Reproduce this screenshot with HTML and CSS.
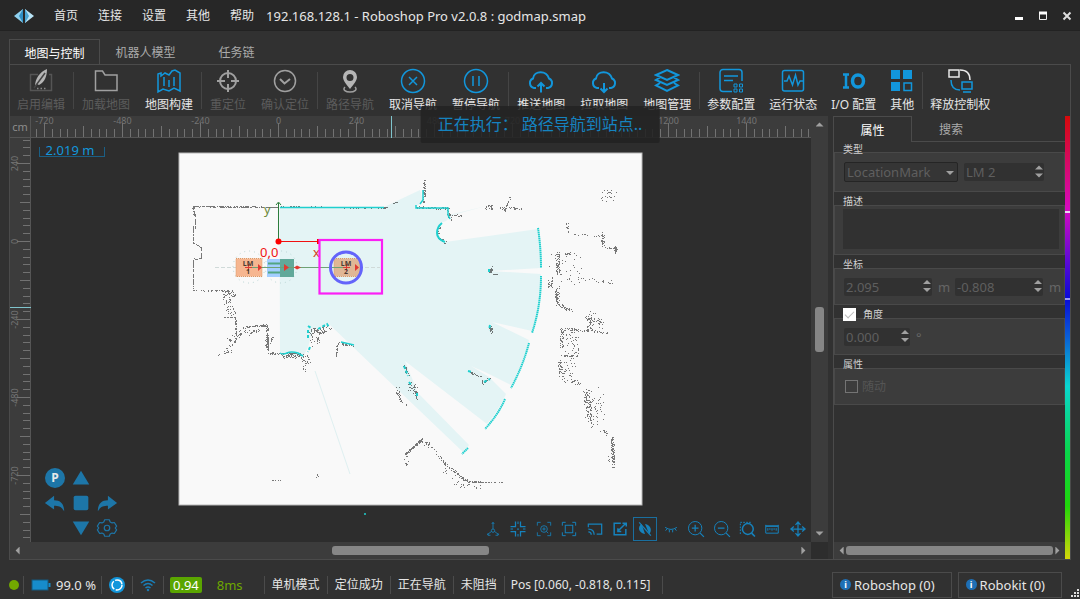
FILE: index.html
```html
<!DOCTYPE html>
<html lang="zh-CN">
<head>
<meta charset="utf-8">
<meta name="viewport" content="width=device-width, initial-scale=1">
<title>Roboshop Pro</title>
<link rel="stylesheet" href="styles.css">
</head>
<body>
<header class="titlebar">
  <svg class="logo" width="20" height="14" viewBox="0 0 20 14"><path d="M9 0v14L0 7z" fill="#8fd0ee"/><path d="M9 0v14L5 7z" fill="#2f8fc4"/><path d="M11 0v14l9-7z" fill="#b9e4f6"/><path d="M11 0v14l4-7z" fill="#4aa5d4"/></svg>
  <nav class="menu">
    <button>首页</button><button>连接</button><button>设置</button><button>其他</button><button>帮助</button>
  </nav>
  <h1 class="title">192.168.128.1 - Roboshop Pro v2.0.8 : godmap.smap</h1>
  <div class="window-buttons">
    <button aria-label="最小化"><svg width="10" height="10"><path d="M1 7.500h8" stroke="#fff" stroke-width="3"/></svg></button>
    <button aria-label="最大化"><svg width="10" height="10"><path d="M1.500 2v6.500h7V2" fill="none" stroke="#eee"/><path d="M1 2h8" stroke="#fff" stroke-width="3"/></svg></button>
    <button aria-label="关闭"><svg width="10" height="10"><path d="M1.500 1.500l7 7M8.500 1.500l-7 7" stroke="#ddd" stroke-width="2"/></svg></button>
  </div>
</header>

<main class="main">
  <div class="tabs" role="tablist">
    <button class="tab active" role="tab" aria-selected="true">地图与控制</button>
    <button class="tab" role="tab">机器人模型</button>
    <button class="tab" role="tab">任务链</button>
  </div>
  <div class="panel">
    <div class="toolbar">
      <button class="tool" disabled><svg viewBox="0 0 26 26"><path d="M10 6.500H2.500v16h21v-16H21" stroke="#555"/><path d="M7 19C7 10 12 4 19 1c0 7-2 13-8 16l-2-1z" fill="#b5b5b5" stroke="none"/><path d="M6 20L17 5" stroke="#444"/><path d="M9 20.500h9" stroke="#888" stroke-dasharray="1.500 2"/></svg>启用编辑</button>
      <i class="sep"></i>
      <button class="tool" disabled><svg viewBox="0 0 26 26"><path d="M2.500 3h7l2.500 4h12v15.500h-21.500z"/></svg>加载地图</button>
      <button class="tool"><svg viewBox="0 0 26 26"><path d="M2 6l3-1v3l4-3 4 2 3-4 3-1 5 3v18l-6-3-5 3-6-2-5 3z M8 9v9M13 12v7M18 9v9"/></svg>地图构建</button>
      <i class="sep"></i>
      <button class="tool" disabled><svg viewBox="0 0 26 26"><circle cx="13" cy="13" r="8" stroke-width="2"/><path d="M13 2v8M13 16v8M2 13h8M16 13h8" stroke-width="2"/></svg>重定位</button>
      <button class="tool" disabled><svg viewBox="0 0 26 26"><circle cx="13" cy="13" r="10.500"/><path d="M8 11l4.500 4.500L18 11" stroke-width="2"/></svg>确认定位</button>
      <i class="sep"></i>
      <button class="tool" disabled><svg viewBox="0 0 26 26"><path d="M13 2a7 7 0 0 1 7 7c0 4-4 8-7 12C10 17 6 13 6 9a7 7 0 0 1 7-7zm0 4a3.500 3.500 0 1 0 0 7 3.500 3.500 0 0 0 0-7z" fill="#b5b5b5" stroke="none" fill-rule="evenodd"/><path d="M8 19c-3 3 1 5 5 5s8-2 5-5"/></svg>路径导航</button>
      <button class="tool"><svg viewBox="0 0 26 26"><circle cx="13" cy="13" r="11.500"/><path d="M9 9l8 8M17 9l-8 8"/></svg>取消导航</button>
      <button class="tool"><svg viewBox="0 0 26 26"><circle cx="13" cy="13" r="11.500"/><path d="M10 8v10M16 8v10"/></svg>暂停导航</button>
      <i class="sep"></i>
      <button class="tool"><svg viewBox="0 0 26 26"><path d="M8 20H6a5 5 0 0 1-1-9.500C6 2 19 2 21 10.500A5 5 0 0 1 20 20h-2M13 24.500V15M9.500 18.500L13 15l3.500 3.500" stroke-width="2"/></svg>推送地图</button>
      <button class="tool"><svg viewBox="0 0 26 26"><path d="M8 20H6a5 5 0 0 1-1-9.500C6 2 19 2 21 10.500A5 5 0 0 1 20 20h-2M13 15v9M9.500 20.500L13 24l3.500-3.500" stroke-width="2"/></svg>拉取地图</button>
      <button class="tool"><svg viewBox="0 0 26 26"><path d="M13 2l11 5-11 5L2 7zM6 9.500L2 12l11 5 11-5-4-2.500M6 15l-4 2.500 11 5.500 11-5.500-4-2.500" stroke-width="2"/></svg>地图管理</button>
      <i class="sep"></i>
      <button class="tool compact"><svg viewBox="0 0 26 26"><path d="M14 23.500H5a3 3 0 0 1-3-3v-16a3 3 0 0 1 3-3h16a3 3 0 0 1 3 3V13M6 8h14M6 12.500h9"/><path d="M16 16h3v3h-3zM21.500 16h3v3h-3zM16 21h3v3h-3zM21.500 21h3v3h-3z" stroke-width="1"/></svg>参数配置</button>
      <button class="tool"><svg viewBox="0 0 26 26"><rect x="2.500" y="2.500" width="21" height="20.500" rx="2"/><path d="M4 13h3l2-5 3.500 9 3-10 2.500 10 2-4h3"/></svg>运行状态</button>
      <button class="tool compact"><svg viewBox="0 0 26 26"><path d="M2 6.500h6M2 19.500h6M5 6v14" stroke-width="2.500"/><ellipse cx="17" cy="13" rx="5.500" ry="6" stroke-width="3.500"/></svg>I/O 配置</button>
      <button class="tool compact"><svg viewBox="0 0 26 26"><path d="M2 2h9v9H2zM14 2h9v9h-9zM2 14h9v9H2z" fill="#1296db" stroke="none"/><path d="M15 15h7.500v7.500H15z" stroke-width="1.500"/></svg>其他</button>
      <i class="sep"></i>
      <button class="tool compact"><svg viewBox="0 0 26 26"><g stroke="#e8e8e8"><path d="M2 2h10v7H2zM13 2c7 0 10 4 10 10"/></g><path d="M15 14h10v7H15zM4 12c0 7 3 10 9 10M16 24h8"/></svg>释放控制权</button>
    </div>

    <div class="workspace">
      <section class="map-area">
        <div class="ruler-unit">cm</div>
        <svg class="ruler" id="ruler-x"></svg>
        <svg class="ruler" id="ruler-y"></svg>
        <div class="viewport">
          <svg class="map">
            <g transform="translate(-31 -138)">
              <rect x="179" y="153" width="463" height="352" fill="#f9f9f9" stroke="#b8b8b8"/>
              <path fill="#e4f4f5" d="M279.500 207H384L420 190l3 11-7 6 32 1 1 7 37-9-33 9-7 6q-10 3-9 11t8 10l93-13q3 20 3 39l-51 3 51 3q0 30-9 57l-40-9 37 18q-6 23-18 45l-24-12-16-7 18 11 17 17q-7 16-19 30l-82-63 13 32 51 52-6 7L330 325l-17 4-5 18-5 10-23-4z"/>
              <path d="M315 371l35 103" stroke="#dff0f1" fill="none"/>
              <g fill="none" stroke="#b8d5d4" stroke-dasharray="1 4"><circle cx="249" cy="267" r="16"/><circle cx="281" cy="267" r="16"/></g>
              <path d="M215 267.500h165" stroke="#d0dad9" stroke-dasharray="4 2"/>
              <g id="walls"></g>
              <g fill="none" stroke="#1fd0cf" stroke-width="2">
                <path stroke-width="1.500" d="M280 207.500H384M280 353q3 2 7 0t11 0l5 3M341 342l13 3M423 190v10l-3 4M416 205v3l15 0h17v7l2 4"/>
                <path d="M442 223q-5 4-5 10t8 9"/>
                <path stroke-dasharray="1.500 .5" d="M538 228q3 20 3 40M541 276q0 30-9 57M529 343q-6 23-18 45M505 399q-7 16-20 30M468 448l-6 6"/>
                <path stroke-dasharray="3 2" d="M308 326l3 2M318 329l9-5 2 3M308 330v10M310 347l-2 5M489 269v4M490 325l-1 5M404 366l4 10M417 393v5M468 371l4 1M484 382l6-3M409 382l3 4"/>
              </g>
              <rect x="236" y="258.500" width="26" height="18" fill="#f6b690" stroke="#dc9966" stroke-dasharray="1 1"/>
              <rect x="334" y="258.500" width="26" height="18" fill="#e0b795" stroke="#dc9966" stroke-dasharray="1 1"/>
              <rect x="267" y="259" width="14" height="18" fill="#a3ceff"/>
              <rect x="280" y="259" width="14" height="18" fill="#61a99a"/>
              <path d="M268 263.500h12M268 272.500h12" stroke="#52a583" stroke-width="2"/>
              <rect x="248" y="267" width="98" height="1" fill="#6fa274"/>
              <g fill="#e03a32"><path d="M258 264l4 3.500-4 3.500zM284 264l5 3.500-5 3.500zM355 264l4 3.500-4 3.500zM294 267.500l3-2 4 2-4 2z"/><path d="M245 267h7v1h-7zM248 264h1v7h-1zM343 267h7v1h-7zM346 264h1v7h-1z"/></g>
              <g class="mark-label"><text x="248" y="266">LM</text><text x="248" y="274">1</text><text x="346" y="266">LM</text><text x="346" y="274">2</text></g>
              <path d="M278.500 241v-38M276 205l2.500-3 2.500 3" fill="none" stroke="#2c7d3c"/>
              <rect x="278" y="241" width="41" height="1" fill="#f01010"/><circle cx="278.500" cy="241.500" r="3" fill="red"/><path d="M317 239h3v5h-3z" fill="red"/>
              <text class="axis-y" x="264" y="214">y</text><text class="axis-x" x="313" y="257">x</text><text class="origin" x="260" y="257">0,0</text>
              <rect x="319.500" y="240" width="62.500" height="53.500" fill="none" stroke="#fb1ff5" stroke-width="2.200"/>
              <circle cx="346" cy="267.500" r="15.500" fill="none" stroke="#6464fa" stroke-width="3"/>
              <circle cx="365" cy="514" r="1" fill="#1fd0cf"/>
            </g>
          </svg>
          <div class="scale">2.019 m</div>
          <div class="drive-pad">
            <button class="park" aria-label="驻车">P</button>
            <button aria-label="前进"><svg viewBox="0 0 24 24"><path d="M12 4l9 15H3z"/></svg></button><span></span>
            <button aria-label="左转"><svg viewBox="0 0 24 24"><path d="M11 4v5c7 0 11 4 11 12-3-5-6-6-11-6v4L1 12z"/></svg></button>
            <button aria-label="停止"><svg viewBox="0 0 24 24"><rect x="4" y="4" width="16" height="16" rx="2"/></svg></button>
            <button aria-label="右转"><svg viewBox="0 0 24 24"><path d="M13 4v5C6 9 2 13 2 21c3-5 6-6 11-6v4l10-7z"/></svg></button>
            <span></span><button aria-label="后退"><svg viewBox="0 0 24 24"><path d="M12 20L3 5h18z"/></svg></button>
            <button aria-label="设置"><svg viewBox="0 0 24 24"><g fill="none" stroke="#1d76a8" stroke-width="1.300" stroke-linejoin="round"><path d="M9.500 3h5l1 2.500 2 1 2.500-.5 2.500 4-1.500 2 1.500 2-2.500 4-2.500-.5-2 1-1 2.500h-5l-1-2.500-2-1-2.500.5-2.500-4 1.500-2-1.500-2 2.500-4 2.500.5 2-1z"/><circle cx="12" cy="12" r="3"/></g></svg></button>
          </div>
          <div class="map-tools">
            <button aria-label="坐标轴"><svg viewBox="0 0 24 24"><path stroke-width="1" d="M12 4v8M5 19l5-4M19 19l-5-4M10.500 6L12 4l1.500 2M6 17v2.500h3M18 17v2.500h-3"/><circle cx="12" cy="14" r="2" stroke-width="1"/></svg></button>
            <button aria-label="居中"><svg viewBox="0 0 24 24"><path d="M3 9h6V3M15 3v6h6M3 15h6v6M15 21v-6h6M11 12h2" stroke-width="1.500"/><path d="M12 3v3M12 18v3M3 12h3M18 12h3"/></svg></button>
            <button aria-label="定位"><svg viewBox="0 0 24 24"><path stroke-width="1" d="M4 8V4h4M16 4h4v4M20 16v4h-4M8 20H4v-4M15 15l2 2M10 12h4M12 10v4"/><circle cx="12" cy="12" r="4" stroke-width="1"/></svg></button>
            <button aria-label="适应窗口"><svg viewBox="0 0 24 24"><path d="M4 8V4h4M16 4h4v4M20 16v4h-4M8 20H4v-4"/><rect x="7.500" y="7.500" width="9" height="9"/></svg></button>
            <button aria-label="投射"><svg viewBox="0 0 24 24"><path d="M4 10V6h16v12h-6M4 12q7 0 7 7M4 15.500q3.500 0 3.500 3.500" stroke-width="1.500"/></svg></button>
            <button aria-label="导出"><svg viewBox="0 0 24 24"><path d="M13 5H5v14h14v-7M9 15L19 5M15 5h4.500v4M9.500 11v4h4" stroke-width="1.800"/></svg></button>
            <button class="on" aria-label="隐藏激光"><svg viewBox="0 0 24 24"><path d="M8 6C2 10 5 17 12 18zM12 6c7 1 9 8 5 12z" fill="#1682bc" stroke="none"/><path d="M5 4l14 16" stroke-width="1.500"/></svg></button>
            <button aria-label="闭眼"><svg viewBox="0 0 24 24"><path d="M5 10q7 5 14 0M7 12l-1.500 2M10 13v3M14 13v3M17 12l1.500 2"/></svg></button>
            <button aria-label="放大"><svg viewBox="0 0 24 24"><circle cx="11" cy="11" r="8"/><path d="M17 17l4.500 4.500M7 11h8M11 7v8" stroke-width="1.500"/></svg></button>
            <button aria-label="缩小"><svg viewBox="0 0 24 24"><circle cx="11" cy="11" r="8"/><path d="M17 17l4.500 4.500M7 11h8" stroke-width="1.500"/></svg></button>
            <button aria-label="框选放大"><svg viewBox="0 0 24 24"><path d="M4 18V4h13" stroke-dasharray="2 1.500"/><circle cx="13" cy="12" r="6.500" stroke-width="1.800"/><path d="M17.500 17l4 4" stroke-width="2"/></svg></button>
            <button aria-label="测距"><svg viewBox="0 0 24 24"><path d="M4.500 7v10h15V7"/><path d="M4.500 8.500h15" stroke-width="2"/><path d="M7 11v3M9.500 11v2M12 11v3M14.500 11v2M17 11v3"/></svg></button>
            <button aria-label="移动"><svg viewBox="0 0 24 24"><path d="M12 4v16M4 12h16M9 7l3-3.500L15 7M9 17l3 3.500 3-3.500M7 9l-3.500 3L7 15M17 9l3.500 3-3.500 3" stroke-width="1.500"/></svg></button>
          </div>
        </div>
        <div class="vscroll"><i class="arrow up"></i><i class="thumb"></i><i class="arrow down"></i></div>
        <div class="hscroll"><i class="arrow left"></i><i class="thumb"></i><i class="arrow right"></i></div>
      </section>

      <aside class="side">
        <div class="side-tabs" role="tablist">
          <button class="side-tab active" role="tab" aria-selected="true">属性</button>
          <button class="side-tab" role="tab">搜索</button>
        </div>
        <div class="side-body">
          <section class="group first">
            <h2 class="group-title">类型</h2>
            <div class="group-body row">
              <span class="select"><select aria-label="类型" disabled><option>LocationMark</option></select></span>
              <span class="spin medium"><input aria-label="编号" value="LM 2" disabled><i class="arrow up"></i><i class="arrow down"></i></span>
            </div>
          </section>
          <section class="group">
            <h2 class="group-title">描述</h2>
            <div class="group-body note"><textarea aria-label="描述" disabled></textarea></div>
          </section>
          <section class="group">
            <h2 class="group-title">坐标</h2>
            <div class="group-body row">
              <span class="spin"><input aria-label="X" value="2.095" disabled><i class="arrow up"></i><i class="arrow down"></i></span><span class="unit">m</span>
              <span class="spin"><input aria-label="Y" value="-0.808" disabled><i class="arrow up"></i><i class="arrow down"></i></span><span class="unit">m</span>
            </div>
          </section>
          <section class="group">
            <h2 class="group-title"><label class="check"><input type="checkbox" checked disabled>角度</label></h2>
            <div class="group-body row">
              <span class="spin small"><input aria-label="角度" value="0.000" disabled><i class="arrow up"></i><i class="arrow down"></i></span><span class="unit">°</span>
            </div>
          </section>
          <section class="group">
            <h2 class="group-title">属性</h2>
            <div class="group-body row"><label class="check plain"><input type="checkbox" disabled>随动</label></div>
          </section>
        </div>
        <div class="hscroll"><i class="arrow left"></i><i class="thumb"></i><i class="arrow right"></i></div>
      </aside>
      <div class="hue"></div>
    </div>
  </div>
</main>

<footer class="status">
  <span class="cell"><i class="dot"></i></span>
  <span class="cell battery"><svg width="20" height="14"><rect x="1" y="2" width="16" height="10" fill="#178ccb" stroke="#155a80"/><path d="M18.500 5v4" stroke="#178ccb" stroke-width="2"/></svg>99.0 %</span>
  <span class="cell"><svg width="16" height="16"><circle cx="8" cy="8" r="8" fill="#1296db"/><circle cx="8" cy="8" r="5" fill="none" stroke="#fff" stroke-width="1.500" stroke-dasharray="9 1.500"/></svg></span>
  <span class="cell"><svg width="16" height="14" fill="none" stroke="#1a7fb8" stroke-width="1.500"><path d="M1 5q7-6 14 0M3.500 7.500q4.500-4 9 0M5.500 10q2.500-2 5 0"/><circle cx="8" cy="12" r=".5"/></svg></span>
  <span class="cell load"><b class="badge">0.94</b><span class="ping">8ms</span></span>
  <span class="cell">单机模式</span><span class="cell">定位成功</span><span class="cell">正在导航</span><span class="cell">未阻挡</span>
  <span class="cell pos">Pos [0.060, -0.818, 0.115]</span>
  <div class="log-buttons">
    <button><i class="info">i</i>Roboshop (0)</button>
    <button><i class="info">i</i>Robokit (0)</button>
  </div>
  <svg class="grip" width="9" height="9" fill="#ddd"><path d="M6 0h2v2H6zM3 3h2v2H3zM6 3h2v2H6zM0 6h2v2H0zM3 6h2v2H3zM6 6h2v2H6z"/></svg>
</footer>
<div class="toast" role="status">正在执行：&nbsp;路径导航到站点..</div>
<script src="map.js"></script>
</body>
</html>
```
FILE: styles.css
```css
* { box-sizing: border-box; }
body { margin: 0; min-height: 100vh; display: flex; flex-direction: column; background: #313131; color: #e6e6e6; font: 12px/16px "Noto Sans", "Noto Sans CJK SC", sans-serif; }
button { border: 0; padding: 0; background: none; color: inherit; font: inherit; }
h1, h2 { margin: 0; font-weight: normal; }
svg { display: block; }

.titlebar { height: 31px; flex: none; display: flex; align-items: center; padding: 2px 8px 0 14px; background: #272727; border-bottom: 1px solid #222; }
.menu { display: flex; gap: 20px; margin: 0 12px 0 20px; }
.title { font-size: 13px; white-space: nowrap; flex: 1; }
.window-buttons { display: flex; gap: 14px; }

.main { flex: 1; display: flex; flex-direction: column; padding: 8px 9px 10px; min-height: 0; }
.tabs { display: flex; height: 26px; flex: none; margin-bottom: -1px; }
.tab { min-width: 91px; padding: 2px 0 0; color: #aaa; }
.tab.active { border: 1px solid #4b4b4b; border-bottom: 0; background: #313131; color: #fff; }
.panel { flex: 1; display: flex; flex-direction: column; min-height: 0; border: 1px solid #4b4b4b; }
.toolbar { display: flex; height: 51px; flex: none; gap: 1px; }
.tool { padding: 3px 7px 0; display: flex; flex-direction: column; align-items: center; gap: 3px; white-space: nowrap; }
.tool.compact { padding: 3px 6px 0; }
.tool svg { width: 26px; height: 26px; fill: none; stroke: #1296db; stroke-width: 1.5; }
.tool:disabled { color: #5c5c5c; }
.tool:disabled svg { stroke: #a0a0a0; }
.sep { width: 1px; height: 37px; margin-top: 7px; background: #454545; flex: none; }

.workspace { flex: 1; display: flex; min-height: 0; }
.map-area { flex: 1; min-width: 0; display: grid; grid-template-columns: 21px 1fr 17px; grid-template-rows: 22px 1fr 17px; background: #2d2d2d; }
.ruler-unit { background: #3c3c3c; color: #8c8c8c; padding-top: 3px; text-align: center; font-size: 11px; border: solid #555; border-width: 0 1px 1px 0; }
.ruler { width: 100%; height: 100%; background: #3c3c3c; overflow: hidden; }
.ruler text { font-size: 9px; fill: #747474; text-anchor: middle; }
#ruler-x { grid-area: 1 / 2; }
#ruler-y { grid-area: 2 / 1; }
.viewport { grid-area: 2 / 2; position: relative; overflow: hidden; background: #2d2d2d; }
.map { position: absolute; width: 100%; height: 100%; }
.mark-label { font-size: 7px; font-weight: bold; fill: #4a3a33; text-anchor: middle; }
.axis-x { font-size: 13px; fill: #d33a1e; }
.axis-y { font-size: 13px; fill: #6d8a3a; }
.origin { font-size: 13px; fill: #f01414; }
.scale { position: absolute; left: 8px; top: 5px; width: 66px; text-align: center; color: #1296db; font-size: 13px; line-height: 14px; padding-right: 4px; }
.scale::after { content: ""; position: absolute; inset: 4px 0 0; border: solid #1b5f85; border-width: 0 1px 1px; }
.drive-pad { position: absolute; left: 11px; bottom: 2px; display: grid; grid-template-columns: repeat(3, 26px); grid-auto-rows: 25px; place-items: center; }
.drive-pad svg { width: 22px; height: 22px; fill: #1d76a8; }
.park { width: 20px; height: 20px; border-radius: 50%; background: #1d76a8; color: #e8e8e8; font-weight: bold; line-height: 20px; }
.map-tools { position: absolute; right: 1px; bottom: 1px; width: 329px; display: flex; justify-content: space-between; }
.map-tools button { width: 24px; height: 24px; display: grid; place-items: center; }
.map-tools .on { border: 1px solid #1a6f9f; }
.map-tools svg { width: 20px; height: 20px; fill: none; stroke: #1682bc; stroke-width: 1.2; }

.arrow { width: 8px; height: 8px; background: #a0a0a0; flex: none; }
.up { clip-path: polygon(50% 30%, 100% 80%, 0 80%); }
.down { clip-path: polygon(0 20%, 100% 20%, 50% 70%); }
.left { clip-path: polygon(20% 50%, 70% 0, 70% 100%); }
.right { clip-path: polygon(30% 0, 80% 50%, 30% 100%); }
.vscroll { grid-area: 1 / 3 / 3 / 4; display: flex; flex-direction: column; justify-content: space-between; align-items: center; padding: 4px 0; background: #3c3c3c; }
.vscroll .thumb { width: 9px; height: 45px; border-radius: 3px; background: #868686; }
.map-area .hscroll { grid-area: 3 / 1 / 4 / 3; }
.hscroll { display: flex; justify-content: space-between; align-items: center; height: 17px; flex: none; padding: 0 4px; background: #3c3c3c; }
.hscroll .thumb { width: 157px; height: 9px; border-radius: 3px; background: #868686; }

.side { width: 232px; margin-left: 5px; flex: none; display: flex; flex-direction: column; border-left: 1px solid #4b4b4b; }
.side-tabs { display: flex; height: 26px; flex: none; border-bottom: 1px solid #4b4b4b; }
.side-tab { width: 78px; padding-top: 2px; color: #aaa; }
.side-tab.active { height: 26px; border: solid #4b4b4b; border-width: 1px 1px 0 0; background: #313131; color: #fff; }
.side-body { flex: 1; min-height: 0; overflow: hidden; }
.side .hscroll .thumb { flex: 1; }
.group-title { height: 13px; padding: 6px 0 0 9px; font-size: 10px; line-height: 7px; color: #d0d0d0; }
.first .group-title { height: 10px; padding-top: 4px; }
.group-body { padding: 0 0 0 9px; border: 1px solid #494949; background: #3c3c3c; }
.row { display: flex; align-items: center; gap: 6px; height: 37px; }
.first .row { height: 40px; }
.note { padding: 3px 5px 5px 8px; }
textarea { display: block; width: 100%; height: 40px; border: 0; background: #313131; resize: none; }
.select { position: relative; width: 114px; }
.select::after { content: ""; position: absolute; right: 4px; top: 9px; border: 4px solid transparent; border-top-color: #a0a0a0; }
select { appearance: none; display: block; width: 100%; height: 20px; padding: 0 2px; border: 1px solid #252525; border-radius: 2px; background: #353535; color: #5f5f5f; opacity: 1; font: 13px/16px "Noto Sans", sans-serif; }
.spin { display: grid; grid-template-columns: 1fr 8px; width: 88px; height: 18px; padding-right: 1px; flex: none; background: #313131; border-radius: 2px; }
.spin.medium { width: 80px; }
.spin.small { width: 66px; }
.spin input { grid-row: 1 / 3; width: 100%; min-width: 0; border: 0; padding: 0 2px; background: none; color: #5f5f5f; font: 13px/16px "Noto Sans", sans-serif; }
.unit { width: 11px; flex: none; color: #666; font-size: 13px; }
.check { display: flex; align-items: center; gap: 7px; height: 7px; }
.check input { appearance: none; width: 13px; height: 13px; margin: 0; background: #fff; display: grid; place-items: center; }
.check input:checked::after { content: ""; width: 8px; height: 4px; margin-bottom: 3px; border: solid #bbb; border-width: 0 0 1px 1px; transform: rotate(-45deg); }
.check.plain { gap: 4px; padding-left: 1px; color: #555; font-size: 12px; }
.check.plain input { border: 1px solid #747474; background: none; }
.hue { width: 5px; flex: none; background: linear-gradient(#e8d8f0, #e8d8f0) 0 95px / 100% 2px no-repeat, linear-gradient(#9a9af5, #9a9af5) 0 182px / 100% 2px no-repeat, linear-gradient(#d60a0a, #d60ac0 21%, #5a0ad6 33%, #0a0ad6 41%, #0a60d6 50%, #0ad6d0 61%, #0ad64a 76%, #20d60a 88%, #d6d60a); }

.status { height: 29px; flex: none; display: flex; align-items: center; padding-left: 9px; }
.cell { display: flex; align-items: center; height: 18px; padding: 0 7px; border-right: 1px solid #4b4b4b; white-space: nowrap; }
.cell:first-child { padding: 0 4px 0 0; }
.dot { width: 10px; height: 10px; border-radius: 50%; background: #72a800; }
.battery { gap: 5px; padding-right: 5px; font-size: 13px; }
.load { gap: 15px; padding: 0 21px 0 6px; font-size: 13px; }
.badge { padding: 0 3px; border-radius: 2px; background: #5aa500; color: #fff; font-weight: normal; }
.ping { color: #6ea800; }
.pos { padding: 0 11px 0 6px; }
.log-buttons { display: flex; gap: 6px; margin-left: auto; }
.log-buttons button { display: flex; align-items: center; gap: 3px; height: 26px; padding: 0 16px 0 7px; border: 1px solid #4b4b4b; font-size: 13px; }
.info { width: 11px; height: 11px; border-radius: 50%; background: #1e6fb5; color: #fff; font: bold 9px/11px "Noto Sans", sans-serif; }
.grip { margin: 18px 0 0 9px; }

.toast { position: absolute; left: 50%; top: 106px; transform: translateX(-50%); padding: 7px 17px; border-radius: 2px; background: rgba(34, 34, 34, .88); color: #1583c0; font-size: 16px; line-height: 23px; white-space: nowrap; }
```
FILE: map.js
```js
const NS = "http://www.w3.org/2000/svg";
function add(parent, tag, attrs, text) {
  const el = document.createElementNS(NS, tag);
  for (const k in attrs) el.setAttribute(k, attrs[k]);
  if (text !== undefined) el.textContent = text;
  parent.append(el);
}

// Rulers: a step is 24 cm, drawn 7.8 px apart; every tenth one has a label.
const STEP = 7.8;
function drawRuler(ruler, origin, size, sign, vertical) {
  let d = "";
  for (let i = Math.ceil(-origin / STEP); origin + i * STEP < size; i++) {
    const len = i % 10 === 0 ? 14 : i % 5 === 0 ? 11 : 8;
    const p = Math.round(origin + i * STEP) + 0.5;
    d += vertical ? `M21 ${p}h${-len}` : `M${p} 21v${-len}`;
    if (i % 10 === 0 && p > 10 && p < size - 12) {
      const place = vertical ? { transform: `translate(8 ${p}) rotate(-90)` } : { x: p, y: 8 };
      add(ruler, "text", place, sign * i * 24 || 0);
    }
  }
  add(ruler, "path", { d: d, stroke: "#727272" });
}
const rx = document.getElementById("ruler-x");
const ry = document.getElementById("ruler-y");
drawRuler(rx, 247, rx.getBoundingClientRect().width, 1, false);
drawRuler(ry, 103, ry.getBoundingClientRect().height, -1, true);
add(rx, "path", { d: "M0 21.5h3000", stroke: "#555" });
add(ry, "path", { d: "M20.5 0v3000", stroke: "#555" });
add(rx, "path", { d: "M360.5 0v22", stroke: "#7fc4cc" });
add(ry, "path", { d: "M0 169.500h21", stroke: "#7fc4cc" });

// Scanned obstacles: x1, y1, x2, y2, number of points, spread.
const walls = [
  [193,206,278,207,150,1],[278,206,384,208,60,1],[193,206,194,215,22,2],[195,215,195,228,26,1],[193,226,193,243,28,1],
  [193,243,201,247,14,1],[201,247,201,258,16,1],[193,259,201,258,10,1],[193,259,193,290,60,1],[193,290,233,291,46,2],
  [224,293,236,295,22,4],[226,296,232,316,42,9],[221,317,235,317,18,1],[235,317,236,335,32,1],[236,334,228,340,10,4],
  [247,326,268,325,36,2],[267,325,268,353,60,1],[268,353,301,354,60,2],[247,326,226,350,40,5],[246,334,262,327,20,5],
  [218,354,232,350,12,2],[266,327,267,348,30,3],[270,342,273,335,12,3],[282,356,299,357,30,3],[301,356,308,361,24,7],
  [304,359,304,370,10,3],[309,330,314,345,12,5],[312,331,328,329,60,7],[317,338,318,342,14,3],[337,344,336,356,20,1],
  [337,343,354,345,24,2],[384,208,398,201,14,1],[424,179,424,203,45,2],[416,207,448,208,50,2],[448,208,450,221,22,3],
  [451,216,461,215,14,3],[440,226,437,235,14,2],[438,236,446,243,16,2],[487,208,492,206,18,6],[499,208,522,208,26,2],
  [504,211,510,196,20,2],[602,195,612,196,22,11],[567,223,568,235,14,2],[574,234,604,235,16,2],[602,233,603,246,30,3],
  [604,247,614,248,10,1],[615,247,616,254,20,3],[557,252,558,274,60,4],[562,253,575,254,14,3],[560,270,571,270,35,35],
  [572,277,611,282,20,3],[550,281,550,285,20,5],[557,287,557,304,55,4],[558,304,572,311,30,4],[588,316,590,328,40,6],
  [595,315,600,328,30,10],[560,328,595,331,40,3],[561,329,561,347,40,4],[570,332,572,352,40,14],[592,331,607,333,14,2],
  [560,355,578,356,26,2],[560,362,561,376,36,4],[568,363,569,380,36,14],[574,380,579,385,12,4],[586,390,589,422,90,7],
  [595,391,599,428,46,15],[603,430,607,435,8,3],[612,437,613,468,85,3],[609,455,608,462,5,2],[490,268,491,272,16,3],
  [492,273,497,275,10,2],[490,325,491,332,22,3],[470,372,481,377,16,2],[482,382,489,379,20,4],[404,366,408,376,16,3],
  [411,383,413,391,24,8],[414,391,417,398,18,3],[397,388,398,396,18,4],[398,397,406,407,10,3],[405,454,423,438,85,2],
  [421,440,431,446,16,4],[405,455,407,466,10,3],[431,446,442,460,12,3],[442,461,466,481,60,3],[466,481,483,482,42,1],
  [483,482,503,482,12,1],[460,485,482,486,14,4],[440,464,464,492,12,7],[269,480,281,480,6,1],[316,475,318,477,4,2],[491,272,491,266,6,3]
];
let seed = 7;
const rand = () => (seed = (seed * 16807) % 2147483647) / 2147483647;
let d = "";
for (const [x1, y1, x2, y2, n, s] of walls) {
  for (let i = 0; i < n; i++) {
    const t = rand();
    const x = Math.round(x1 + (x2 - x1) * t + (rand() - 0.5) * s);
    const y = Math.round(y1 + (y2 - y1) * t + (rand() - 0.5) * s);
    d += `M${x} ${y}h1v1h-1z`;
  }
}
add(document.getElementById("walls"), "path", { d: d, fill: "#222", "fill-opacity": 0.6 });
```
